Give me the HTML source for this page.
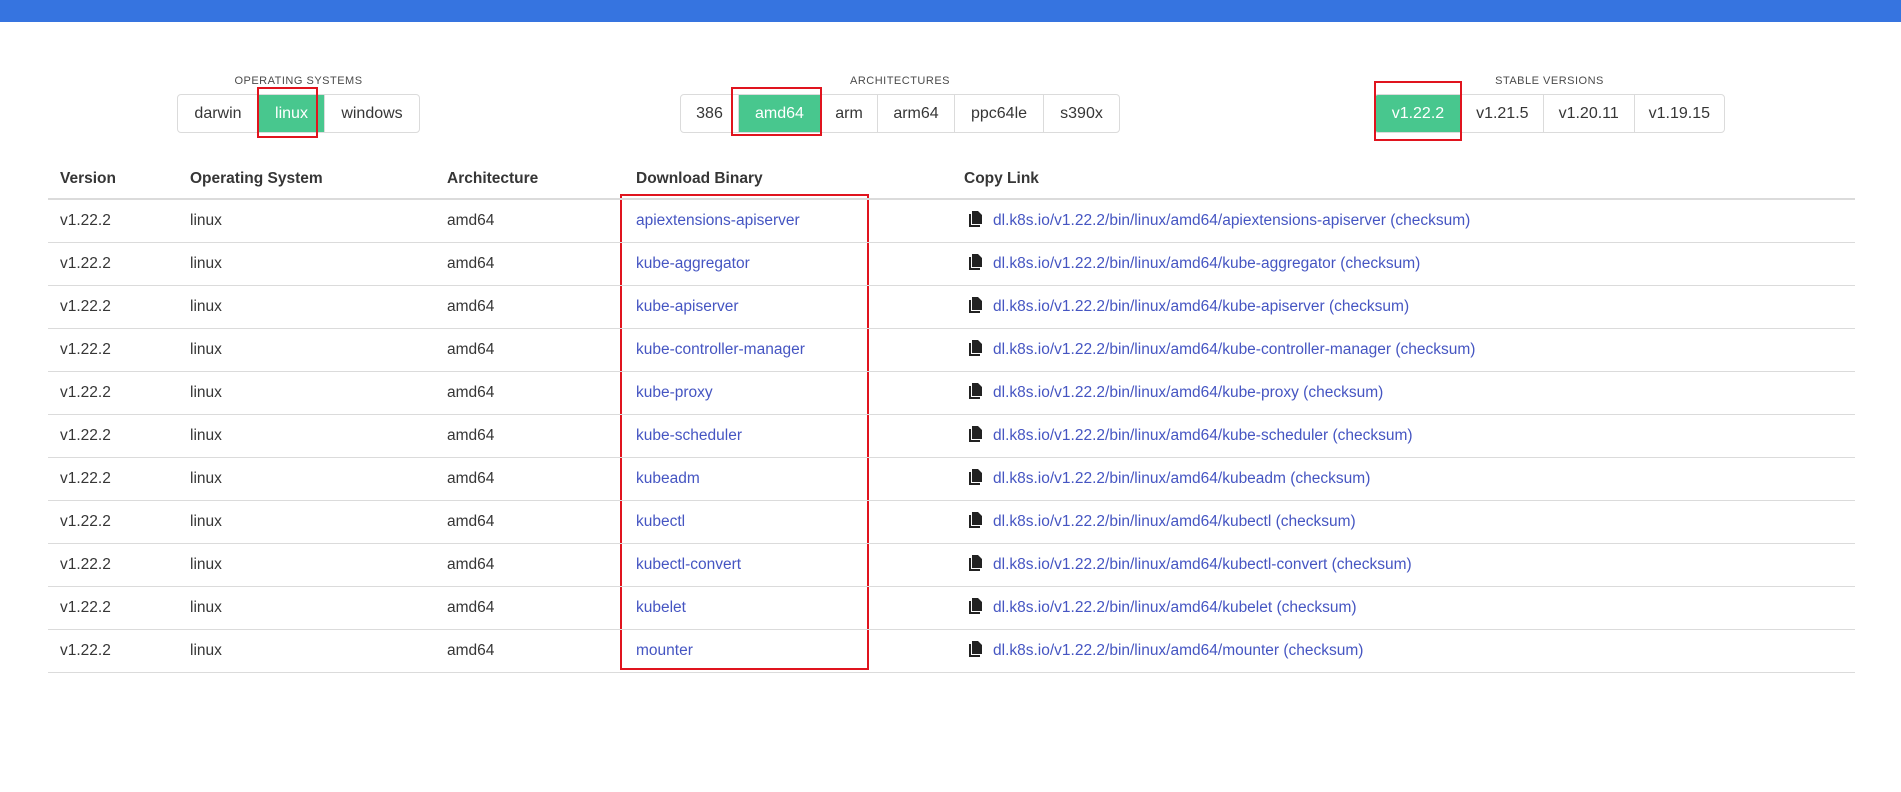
<!DOCTYPE html>
<html><head><meta charset="utf-8"><style>
*{box-sizing:border-box;margin:0;padding:0}
body{width:1901px;height:792px;background:#fff;font-family:"Liberation Sans",sans-serif;color:#363636;position:relative;overflow:hidden}
.bar{position:absolute;left:0;top:0;width:1901px;height:22px;background:#3674e0}
.lbl{position:absolute;top:75px;font-size:11px;letter-spacing:.5px;color:#4a4a4a;text-align:center}
.grp{position:absolute;top:94px;height:39px;display:flex;border:1px solid #dbdbdb;border-radius:4px;overflow:hidden}
.grp div{height:37px;line-height:37px;font-size:16px;padding:0 14px;border-right:1px solid #dbdbdb;color:#363636}
.grp div:last-child{border-right:none}
.grp .on{background:#48c78e;color:#fff}
.red{position:absolute;border:2px solid #e0141e}
table{position:absolute;left:48px;top:160px;width:1807px;border-collapse:collapse;font-size:15.5px}
th{text-align:left;font-weight:bold;height:39px;border-bottom:2px solid #dbdbdb;color:#363636;padding:0 12px}
td{height:43px;border-bottom:1px solid #dbdbdb;padding:0 12px}
a{color:#4555c2;text-decoration:none}
svg{vertical-align:-2px;margin-left:5px;margin-right:11px}
</style></head><body>
<div class="bar"></div>
<div class="lbl" style="left:177px;width:243px">OPERATING SYSTEMS</div>
<div class="grp" style="left:177px;width:243px"><div style="width:81px;text-align:center">darwin</div><div class="on" style="width:66px;text-align:center">linux</div><div style="flex:1;text-align:center">windows</div></div>
<div class="lbl" style="left:680px;width:440px">ARCHITECTURES</div>
<div class="grp" style="left:680px;width:440px"><div style="width:58px;text-align:center">386</div><div class="on" style="width:82px;text-align:center">amd64</div><div style="width:57px;text-align:center">arm</div><div style="width:77px;text-align:center">arm64</div><div style="width:89px;text-align:center">ppc64le</div><div style="flex:1;text-align:center">s390x</div></div>
<div class="lbl" style="left:1374px;width:351px">STABLE VERSIONS</div>
<div class="grp" style="left:1374px;width:351px"><div class="on" style="width:87px;text-align:center">v1.22.2</div><div style="width:82px;text-align:center">v1.21.5</div><div style="width:91px;text-align:center">v1.20.11</div><div style="flex:1;text-align:center">v1.19.15</div></div>
<div class="red" style="left:257px;top:87px;width:61px;height:51px"></div>
<div class="red" style="left:731px;top:87px;width:91px;height:49px"></div>
<div class="red" style="left:1374px;top:81px;width:88px;height:60px"></div>
<div class="red" style="left:620px;top:194px;width:249px;height:476px"></div>
<table>
<tr><th style="width:130px">Version</th><th style="width:257px">Operating System</th><th style="width:189px">Architecture</th><th style="width:328px">Download Binary</th><th>Copy Link</th></tr>
</table>
<script>
var n=["apiextensions-apiserver","kube-aggregator","kube-apiserver","kube-controller-manager","kube-proxy","kube-scheduler","kubeadm","kubectl","kubectl-convert","kubelet","mounter"];
var t=document.querySelector("table"),h="";
n.forEach(function(x){h+='<tr><td>v1.22.2</td><td>linux</td><td>amd64</td><td><a>'+x+'</a></td><td><svg width="13" height="16" viewBox="0 0 13 16"><path d="M3 0h6l4 4v9H3z" fill="#222"/><path d="M0 3h2v11h9v2H0z" fill="#222"/></svg><a>dl.k8s.io/v1.22.2/bin/linux/amd64/'+x+' (checksum)</a></td></tr>'});
t.insertAdjacentHTML("beforeend",h);
</script>
</body></html>
